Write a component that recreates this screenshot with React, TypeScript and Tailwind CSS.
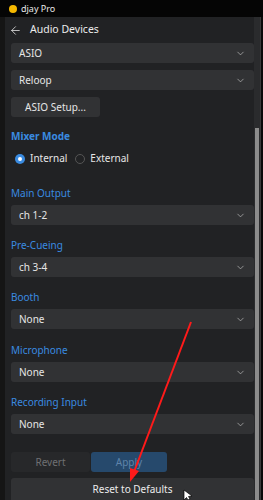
import { ChevronDown, ArrowLeft } from 'lucide-react'

function Select({ value }: { value: string }) {
  return (
    <div className="flex h-[20px] items-center justify-between rounded-[3px] bg-[#313234] pl-[8px] pr-[8px]">
      <span className="text-[10px] text-[#e6e6e6]">{value}</span>
      <ChevronDown size={11} strokeWidth={1.5} className="text-[#bdbdbd]" />
    </div>
  )
}

function Label({ text }: { text: string }) {
  return <div className="mb-[6px] text-[10px] leading-[12px] text-[#3a8be0]">{text}</div>
}

export default function App() {
  return (
    <div className="relative flex h-[500px] w-[263px] flex-col overflow-hidden bg-black" style={{ fontFamily: '"Noto Sans", "Open Sans", sans-serif' }}>
      <div className="flex h-[19px] items-center bg-[#050505] pl-[9px]">
        <div className="h-[8px] w-[8px] rounded-full bg-[#f5b800]" />
        <span className="ml-[4px] text-[9px] text-[#e8e8e8]">djay Pro</span>
      </div>
      <div className="flex flex-1">
        <div className="w-[5px] bg-[#151515]" />
        <div className="flex flex-1 flex-col bg-[#212224] pl-[6px]">
          <div className="flex h-[26px] items-center">
            <ArrowLeft size={13} strokeWidth={1.5} className="ml-[-2px] text-[#e0e0e0]" />
            <span className="ml-[8px] text-[10.5px] text-[#ececec]">Audio Devices</span>
          </div>
          <div className="flex flex-col gap-[7px]">
            <Select value="ASIO" />
            <Select value="Reloop" />
            <div className="flex h-[20px] w-[89px] items-center justify-center rounded-[3px] bg-[#313234] text-[10px] text-[#e6e6e6]">
              ASIO Setup...
            </div>
          </div>
          <div className="mt-[13px] text-[10px] font-bold leading-[12px] text-[#3a8be0]">Mixer Mode</div>
          <div className="mt-[9px] flex items-center text-[10px] text-[#e6e6e6]">
            <div className="ml-[4px] flex h-[10px] w-[10px] items-center justify-center rounded-full bg-[#3a8be0]">
              <div className="h-[4px] w-[4px] rounded-full bg-white" />
            </div>
            <span className="ml-[5px]">Internal</span>
            <div className="ml-[8px] h-[10px] w-[10px] rounded-full border border-[#555]" />
            <span className="ml-[5px]">External</span>
          </div>
          <div className="mt-[21px]">
            <Label text="Main Output" />
            <Select value="ch 1-2" />
          </div>
          <div className="mt-[14px]">
            <Label text="Pre-Cueing" />
            <Select value="ch 3-4" />
          </div>
          <div className="mt-[14px]">
            <Label text="Booth" />
            <Select value="None" />
          </div>
          <div className="mt-[15px]">
            <Label text="Microphone" />
            <Select value="None" />
          </div>
          <div className="mt-[14px]">
            <Label text="Recording Input" />
            <Select value="None" />
          </div>
          <div className="mt-[18px] flex gap-[1px]">
            <div className="flex h-[20px] w-[79px] items-center justify-center rounded-[3px] bg-[#27282a] text-[10px] text-[#6f7072]">Revert</div>
            <div className="flex h-[20px] w-[76px] items-center justify-center rounded-[3px] bg-[#26496c] text-[10px] text-[#5f84aa]">Apply</div>
          </div>
          <div className="mt-[6px] flex h-[22px] items-center justify-center rounded-t-[3px] bg-[#313234] text-[10px] text-[#ececec]">
            Reset to Defaults
          </div>
        </div>
        <div className="flex w-[6px] flex-col bg-[#2a2b2d]">
          <div className="h-[111px]" />
          <div className="mx-[1px] flex-1 bg-[#8c8c8c]" />
        </div>
        <div className="w-[1px] bg-[#3a3a3a]" />
        <div className="w-[2px] bg-[#0a0a0a]" />
      </div>
      <svg className="absolute left-0 top-0" width="263" height="500" viewBox="0 0 263 500">
        <line x1="191" y1="322" x2="134" y2="472" stroke="#ff1a1a" strokeWidth="2" />
        <polygon points="130,482 130,468 139,471" fill="#ff1a1a" />
        <path d="M184 490 L184 500 L186.5 497.5 L188 500 L190 499 L188.5 496.5 L192 496 Z" fill="#fff" stroke="#000" strokeWidth="0.7" />
      </svg>
    </div>
  )
}
